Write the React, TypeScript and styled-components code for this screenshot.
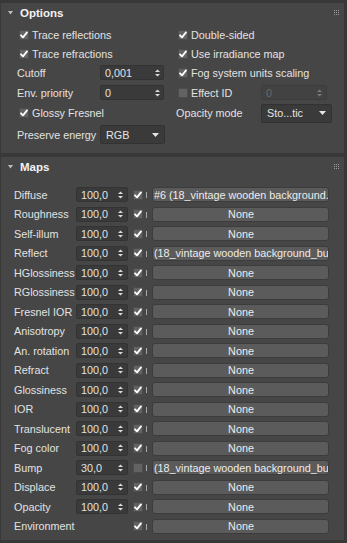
import React from 'react';
import styled, { createGlobalStyle } from 'styled-components';

const Global = createGlobalStyle`
  html, body { margin: 0; padding: 0; background: #383838; }
  body {
    font-family: "Liberation Sans", Arial, sans-serif;
    font-size: 10.8px;
    color: #e2e2e2;
  }
  * { box-sizing: border-box; }
`;

const Page = styled.div`
  width: 347px;
  height: 543px;
  padding: 3px 3px 3px 1px;
  display: flex;
  flex-direction: column;
  gap: 4px;
  background: #383838;
  overflow: hidden;
`;

const Panel = styled.section<{ $h: number }>`
  height: ${(p) => p.$h}px;
  flex: none;
  background: #464646;
  display: flex;
  flex-direction: column;
`;

const Header = styled.div`
  height: 19px;
  flex: none;
  display: flex;
  align-items: center;
  padding-left: 7px;
  gap: 7px;
  font-weight: bold;
  font-size: 11.5px;
  color: #f2f2f2;
`;

const Grip = styled.svg`
  margin-left: auto;
  margin-right: 5px;
`;

const OptionsGrid = styled.div`
  display: grid;
  grid-template-columns: 159px 1fr;
  grid-template-rows: 19px 19px 19.5px 20px 21.5px 21px;
  padding: 3px 0 0 16px;
`;

const Cell = styled.div<{ $indent?: number }>`
  display: flex;
  align-items: center;
  padding-left: ${(p) => p.$indent ?? 0}px;
  white-space: nowrap;
`;

const CheckLabel = styled.label`
  display: flex;
  align-items: center;
  gap: 3px;
`;

const LabelBox = styled.span<{ $w: number }>`
  width: ${(p) => p.$w}px;
  flex: none;
  display: flex;
  align-items: center;
  white-space: nowrap;
`;

const Box = styled.span`
  width: 10px;
  height: 10px;
  flex: none;
  background: #626262;
  border: 1px solid #4c4c4c;
  display: flex;
  align-items: center;
  justify-content: center;
`;

const SpinBox = styled.div<{ $w: number; $disabled?: boolean; $arrowRight?: number }>`
  width: ${(p) => p.$w}px;
  height: 15px;
  flex: none;
  background: ${(p) => (p.$disabled ? '#424242' : '#3a3a3a')};
  border: 1px solid ${(p) => (p.$disabled ? '#3c3c3c' : '#333333')};
  border-radius: 2px;
  display: flex;
  align-items: center;
  padding: 0 ${(p) => p.$arrowRight ?? 3}px 0 4px;
  color: ${(p) => (p.$disabled ? '#6a6a6a' : '#e2e2e2')};
  svg { margin-left: auto; }
`;

const Select = styled.div<{ $w: number }>`
  width: ${(p) => p.$w}px;
  height: 19px;
  flex: none;
  background: #3a3a3a;
  border: 1px solid #323232;
  border-radius: 2px;
  display: flex;
  align-items: center;
  padding: 0 5px 0 5px;
  color: #e4e4e4;
  svg { margin-left: auto; }
`;

const MapsList = styled.div`
  display: flex;
  flex-direction: column;
  padding: 9px 0 0 13px;
`;

const MapRow = styled.div`
  height: 19.5px;
  display: flex;
  align-items: center;
`;

const MapLabel = styled.span`
  width: 62px;
  flex: none;
  white-space: nowrap;
  overflow: hidden;
`;

const SpinSlot = styled.div`
  width: 52px;
  flex: none;
`;

const MapCheck = styled(Box)`
  margin-left: 5px;
`;

const Tick = styled.span`
  width: 1px;
  height: 6px;
  margin: 1px 0 0 2.5px;
  flex: none;
  background: #a8a8a8;
`;

const MapButton = styled.div<{ $filled?: boolean }>`
  width: 177px;
  height: 15px;
  margin-left: 5.5px;
  flex: none;
  background: #5b5b5b;
  border: 1px solid #3c3c3c;
  border-radius: 3px;
  display: flex;
  align-items: center;
  justify-content: ${(p) => (p.$filled ? 'flex-start' : 'center')};
  padding: 0 0 0 1px;
  overflow: hidden;
  white-space: nowrap;
  color: #ececec;
  span { flex: none; }
`;

const Triangle = () => (
  <svg width="5" height="4" viewBox="0 0 5 4">
    <polygon points="0,0 5,0 2.5,3.5" fill="#bdbdbd" />
  </svg>
);

const GripIcon = () => (
  <Grip width="5" height="5" viewBox="0 0 5 5">
    {[0, 2, 4].map((y) =>
      [0, 2, 4].map((x) => <rect key={`${x}-${y}`} x={x} y={y} width="1" height="1" fill="#9c9c9c" />)
    )}
  </Grip>
);

const Arrows = ({ color = '#dadada' }: { color?: string }) => (
  <svg width="5" height="8" viewBox="0 0 5 8">
    <polygon points="0,3 2.5,0.5 5,3" fill={color} />
    <polygon points="0,5 2.5,7.5 5,5" fill={color} />
  </svg>
);

const DropArrow = () => (
  <svg width="7" height="4" viewBox="0 0 7 4">
    <polygon points="0,0 7,0 3.5,4" fill="#e6e6e6" />
  </svg>
);

const CheckMark = () => (
  <svg width="8" height="8" viewBox="0 0 8 8">
    <path d="M1 4.3 L3 6.4 L7 1.4" fill="none" stroke="#ffffff" strokeWidth="1.8" strokeLinecap="round" strokeLinejoin="round" />
  </svg>
);

const Check = ({ checked, label }: { checked: boolean; label: string }) => (
  <CheckLabel>
    <Box>{checked && <CheckMark />}</Box>
    {label}
  </CheckLabel>
);

type MapItem = { name: string; amount?: string; on: boolean; map?: string };

const FILE_A = '#6 (18_vintage wooden background.';
const FILE_B = '(18_vintage wooden background_bu';

const maps: MapItem[] = [
  { name: 'Diffuse', amount: '100,0', on: true, map: FILE_A },
  { name: 'Roughness', amount: '100,0', on: true },
  { name: 'Self-illum', amount: '100,0', on: true },
  { name: 'Reflect', amount: '100,0', on: true, map: FILE_B },
  { name: 'HGlossiness', amount: '100,0', on: true },
  { name: 'RGlossiness', amount: '100,0', on: true },
  { name: 'Fresnel IOR', amount: '100,0', on: true },
  { name: 'Anisotropy', amount: '100,0', on: true },
  { name: 'An. rotation', amount: '100,0', on: true },
  { name: 'Refract', amount: '100,0', on: true },
  { name: 'Glossiness', amount: '100,0', on: true },
  { name: 'IOR', amount: '100,0', on: true },
  { name: 'Translucent', amount: '100,0', on: true },
  { name: 'Fog color', amount: '100,0', on: true },
  { name: 'Bump', amount: '30,0', on: false, map: FILE_B },
  { name: 'Displace', amount: '100,0', on: true },
  { name: 'Opacity', amount: '100,0', on: true },
  { name: 'Environment', on: true },
];

export default function App() {
  return (
    <>
      <Global />
      <Page>
        <Panel $h={150}>
          <Header>
            <Triangle />
            Options
            <GripIcon />
          </Header>
          <OptionsGrid>
            <Cell $indent={2}><Check checked label="Trace reflections" /></Cell>
            <Cell $indent={2}><Check checked label="Double-sided" /></Cell>

            <Cell $indent={2}><Check checked label="Trace refractions" /></Cell>
            <Cell $indent={2}><Check checked label="Use irradiance map" /></Cell>

            <Cell>
              <LabelBox $w={83}>Cutoff</LabelBox>
              <SpinBox $w={64} $arrowRight={3}>0,001<Arrows /></SpinBox>
            </Cell>
            <Cell $indent={2}><Check checked label="Fog system units scaling" /></Cell>

            <Cell>
              <LabelBox $w={83}>Env. priority</LabelBox>
              <SpinBox $w={64} $arrowRight={3}>0<Arrows /></SpinBox>
            </Cell>
            <Cell $indent={2}>
              <LabelBox $w={83}><Check checked={false} label="Effect ID" /></LabelBox>
              <SpinBox $w={66} $disabled $arrowRight={4}>0<Arrows color="#7a7a7a" /></SpinBox>
            </Cell>

            <Cell $indent={2}><Check checked label="Glossy Fresnel" /></Cell>
            <Cell>
              <LabelBox $w={85}>Opacity mode</LabelBox>
              <Select $w={71}>Sto...tic<DropArrow /></Select>
            </Cell>

            <Cell>
              <LabelBox $w={83}>Preserve energy</LabelBox>
              <Select $w={65}>RGB<DropArrow /></Select>
            </Cell>
            <Cell />
          </OptionsGrid>
        </Panel>

        <Panel $h={383}>
          <Header>
            <Triangle />
            Maps
            <GripIcon />
          </Header>
          <MapsList>
            {maps.map((m) => (
              <MapRow key={m.name}>
                <MapLabel>{m.name}</MapLabel>
                {m.amount ? (
                  <SpinBox $w={52} $arrowRight={4}>{m.amount}<Arrows /></SpinBox>
                ) : (
                  <SpinSlot />
                )}
                <MapCheck>{m.on && <CheckMark />}</MapCheck>
                <Tick />
                <MapButton $filled={!!m.map}>
                  <span>{m.map ?? 'None'}</span>
                </MapButton>
              </MapRow>
            ))}
          </MapsList>
        </Panel>
      </Page>
    </>
  );
}
